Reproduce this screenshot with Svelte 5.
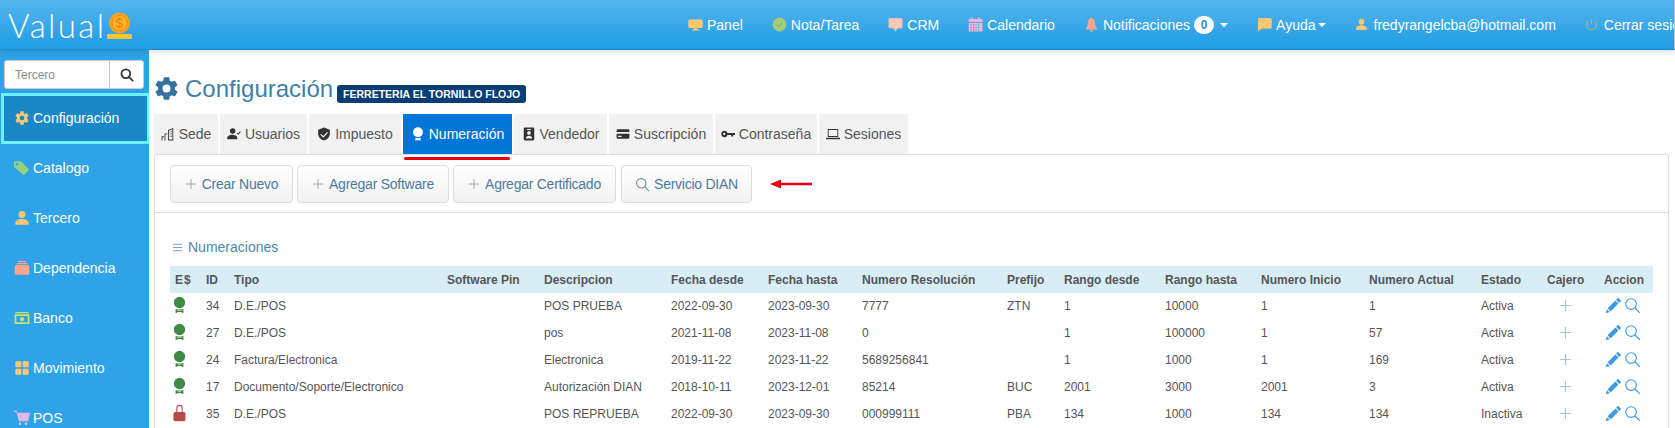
<script>
  // icon paths, all on a 24 box
  const paths = {
    gear: 'M12 15.5A3.5 3.5 0 0 1 8.5 12 3.5 3.5 0 0 1 12 8.5a3.5 3.5 0 0 1 3.5 3.5 3.5 3.5 0 0 1-3.5 3.5m7.43-2.53c.04-.32.07-.64.07-.97s-.03-.66-.07-1l2.11-1.63c.19-.15.24-.42.12-.64l-2-3.46c-.12-.22-.39-.31-.61-.22l-2.49 1c-.52-.39-1.06-.73-1.69-.98l-.37-2.65A.506.506 0 0 0 14 2h-4c-.25 0-.46.18-.5.42l-.37 2.65c-.63.25-1.17.59-1.69.98l-2.49-1c-.22-.09-.49 0-.61.22l-2 3.46c-.13.22-.07.49.12.64L4.57 11c-.04.34-.07.67-.07 1s.03.65.07.97l-2.11 1.66c-.19.15-.25.42-.12.64l2 3.46c.12.22.39.3.61.22l2.49-1.01c.52.4 1.06.74 1.69.99l.37 2.65c.04.24.25.42.5.42h4c.25 0 .46-.18.5-.42l.37-2.65c.63-.26 1.17-.59 1.69-.99l2.49 1.01c.22.08.49 0 .61-.22l2-3.46c.12-.22.07-.49-.12-.64l-2.11-1.66z',
    tag: 'M0 2h10l13 12.500L14.500 23 0 10zM4.500 4.500a2 2 0 1 0 0 4 2 2 0 0 0 0-4z',
    person: 'M12 12a5.2 5.2 0 1 0 0-10.4A5.2 5.2 0 0 0 12 12zm0 1.6c-4.6 0-10 2.2-10 5.6V22h20v-2.8c0-3.400-5.400-5.600-10-5.600z',
    box: 'M6 1.500h12v2H6zM4 4.500h16v2H4zM3.500 7.500h17A2.500 2.500 0 0 1 23 10v9.500a2.500 2.500 0 0 1-2.500 2.500h-17A2.500 2.500 0 0 1 1 19.500V10a2.500 2.500 0 0 1 2.500-2.500z',
    bank: 'M2 3h20v2H2zM1 6.500h22V21H1zM3.500 9v9.500h17V9zM12 10.500a3.200 3.200 0 1 0 0 6.400 3.200 3.200 0 0 0 0-6.400z',
    grid: 'M3 2h7a1.500 1.500 0 0 1 1 1v7a1.500 1.500 0 0 1-1 1H3a1.500 1.500 0 0 1-1-1V3a1.500 1.500 0 0 1 1-1zM14 2h7a1.500 1.500 0 0 1 1 1v7a1.500 1.500 0 0 1-1 1h-7a1.500 1.500 0 0 1-1-1V3a1.500 1.500 0 0 1 1-1zM3 13h7a1.500 1.500 0 0 1 1 1v7a1.500 1.500 0 0 1-1 1H3a1.500 1.500 0 0 1-1-1v-7a1.500 1.500 0 0 1 1-1zM14 13h7a1.500 1.500 0 0 1 1 1v7a1.500 1.500 0 0 1-1 1h-7a1.500 1.500 0 0 1-1-1v-7a1.500 1.500 0 0 1 1-1z',
    cart: 'M0 1h4.500l1 3H24l-2.500 13H7.500L3.500 3H0zM9 18.500a2 2 0 1 0 0 4 2 2 0 0 0 0-4zM18 18.500a2 2 0 1 0 0 4 2 2 0 0 0 0-4z',
    monitor: 'M3 4h18a2.500 2.500 0 0 1 2.500 2.500V15a2.500 2.500 0 0 1-2.500 2.500h-6V20h3v1.500H6V20h3v-2.500H3A2.500 2.500 0 0 1 .5 15V6.500A2.500 2.500 0 0 1 3 4z',
    note: 'M12 1a11 11 0 1 0 0 22 11 11 0 0 0 0-22z',
    bubble: 'M3 2h18a2 2 0 0 1 2 2v12a2 2 0 0 1-2 2h-5.500L12 23l-3.500-5H3a2 2 0 0 1-2-2V4a2 2 0 0 1 2-2z',
    calendar: 'M5 1h3v2h8V1h3v2h4v5H1V3h4zM1 9.500h22V23H1zM4 11.500v2h2v-2zM8 11.500v2h2v-2zM12 11.500v2h2v-2zM16 11.500v2h2v-2zM4 15.500v2h2v-2zM8 15.500v2h2v-2zM12 15.500v2h2v-2zM16 15.500v2h2v-2zM4 19.500v2h2v-2zM8 19.500v2h2v-2zM12 19.500v2h2v-2zM16 19.500v2h2v-2z',
    bell: 'M12 1a1.800 1.800 0 0 1 1.800 1.800C17 3.800 18 7 18 10c0 4 1 6.500 3 8.500v1.500H3v-1.500c2-2 3-4.500 3-8.500 0-3 1-6.200 4.200-7.200A1.800 1.800 0 0 1 12 1zM9.500 21h5a2.500 2.500 0 0 1-5 0z',
    chat: 'M4 1.500h17A2.500 2.500 0 0 1 23.500 4v12a2.500 2.500 0 0 1-2.500 2.500H8L1.500 23V4A2.500 2.500 0 0 1 4 1.500z',
    building: 'M12 23V5l9-3.500V23zM13.500 6.500v15h6V3.800zM15 7.500v2h1.200v-2zM17.500 6.500v2h1.200v-2zM15 11v2h1.200v-2zM17.500 10.500v2h1.200v-2zM15 15v2h1.200v-2zM17.500 14.500v2h1.200v-2zM6 23V11h5v1.500H7.500V23zM1 23v-7h4v1.500H2.500V23z',
    usercheck: 'M9 11.500A4.800 4.800 0 1 0 9 2a4.800 4.800 0 0 0 0 9.500zM9 13.200c-3.800 0-8.500 1.800-8.500 5V21h17v-2.800c0-3.200-4.700-5-8.500-5zM17 10.500l1.200-1.200 1.300 1.400 3-3.300 1.200 1.100-4.200 4.600z',
    shield: 'M12 1l10 3.500v7c0 5.500-4 10-10 11.500C6 21.500 2 17 2 11.500v-7zM17.300 8.500l-6.500 6.800-3.700-3.500-1.500 1.500 5.200 5 8-8.300z',
    award: 'M12 .5a8.500 8.500 0 1 1 0 17 8.500 8.500 0 0 1 0-17zM7.500 18.500c3 1 6 1 9 0V23.500l-2-1h-5l-2 1z',
    medal: 'M12 .5a8 8 0 1 1 0 16 8 8 0 0 1 0-16zM6.500 17.500c3.500 1.300 7.500 1.300 11 0V23.800l-3.500-1.800h-4l-3.500 1.800zM10 19.300l-1 .8h6l-1-.8z',
    badge: 'M5 1h14a2 2 0 0 1 2 2v18a2 2 0 0 1-2 2H5a2 2 0 0 1-2-2V3a2 2 0 0 1 2-2zM8.500 3.500v1.500h7V3.500zM12 7a3.200 3.200 0 1 0 0 6.400A3.200 3.200 0 0 0 12 7zM6.500 19.500h11c0-2.600-2.500-4.500-5.500-4.500s-5.500 1.900-5.500 4.500z',
    card: 'M3 4h18a2 2 0 0 1 2 2v2.500H1V6a2 2 0 0 1 2-2zM1 11.500h22V18a2 2 0 0 1-2 2H3a2 2 0 0 1-2-2zM3.500 15v2h6v-2z',
    key: 'M6 6.500a5.500 5.500 0 0 1 5.200 3.800H24v3.500h-3v2.500h-3.500v-2.500h-6.300A5.500 5.500 0 1 1 6 6.500zM5.500 10a2 2 0 1 0 0 4 2 2 0 0 0 0-4z',
    laptop: 'M3 3.500h18V17H3zM4.500 5v10.500h15V5zM0 18.500h24V20a1 1 0 0 1-1 1H1a1 1 0 0 1-1-1z',
    pencil: 'M18.500 1.200l4.300 4.300-2.800 2.800-4.300-4.300zM14.700 5l4.300 4.300L8 20.300l-4.300-4.300zM2.700 17.300l4 4L1 23z',
    lock: 'M12 .5a4.500 4.500 0 0 1 4.500 4.500v5.500h1.500A2.500 2.500 0 0 1 20.500 13v8a2.500 2.500 0 0 1-2.500 2.500H6A2.500 2.500 0 0 1 3.500 21v-8A2.500 2.500 0 0 1 6 10.500h1.500V5A4.500 4.500 0 0 1 12 .5zM12 2a3 3 0 0 0-3 3v5.500h6V5a3 3 0 0 0-3-3z',
    search: 'M10 2.500a7.500 7.500 0 1 1 0 15 7.500 7.500 0 0 1 0-15zM15.500 15.500L22.500 22.500',
    plus: 'M12 2v20M2 12h20',
    lines: 'M2 5h20M2 12h20M2 19h20',
    power: 'M12 2v9M7 5.200a9 9 0 1 0 10 0'
  };
  const strokeIcons = ['search', 'plus', 'lines', 'power'];

  const topLinks = [
    { label: 'Panel', icon: 'monitor', cls: 'c-orange' },
    { label: 'Nota/Tarea', icon: 'note', cls: 'c-green', check: true },
    { label: 'CRM', icon: 'bubble', cls: 'c-peach' },
    { label: 'Calendario', icon: 'calendar', cls: 'c-pink' },
    { label: 'Notificaciones', icon: 'bell', cls: 'c-salmon', badge: '0', caret: true },
    { label: 'Ayuda', icon: 'chat', cls: 'c-orange', caret: true },
    { label: 'fredyrangelcba@hotmail.com', icon: 'person', cls: 'c-orange small' },
    { label: 'Cerrar sesión', icon: 'power', cls: 'c-gold small' }
  ];

  const menu = [
    { label: 'Configuración', icon: 'gear', cls: 'c-orange', active: true },
    { label: 'Catalogo', icon: 'tag', cls: 'c-lime' },
    { label: 'Tercero', icon: 'person', cls: 'c-orange' },
    { label: 'Dependencia', icon: 'box', cls: 'c-salmon' },
    { label: 'Banco', icon: 'bank', cls: 'c-olive' },
    { label: 'Movimiento', icon: 'grid', cls: 'c-orange' },
    { label: 'POS', icon: 'cart', cls: 'c-lilac' }
  ];

  const tabs = [
    { label: 'Sede', icon: 'building' },
    { label: 'Usuarios', icon: 'usercheck' },
    { label: 'Impuesto', icon: 'shield' },
    { label: 'Numeración', icon: 'award', active: true },
    { label: 'Vendedor', icon: 'badge' },
    { label: 'Suscripción', icon: 'card' },
    { label: 'Contraseña', icon: 'key' },
    { label: 'Sesiones', icon: 'laptop' }
  ];

  const actions = [
    { label: 'Crear Nuevo', icon: 'plus' },
    { label: 'Agregar Software', icon: 'plus' },
    { label: 'Agregar Certificado', icon: 'plus' },
    { label: 'Servicio DIAN', icon: 'search' }
  ];

  const columns = ['E$', 'ID', 'Tipo', 'Software Pin', 'Descripcion', 'Fecha desde', 'Fecha hasta', 'Numero Resolución', 'Prefijo', 'Rango desde', 'Rango hasta', 'Numero Inicio', 'Numero Actual', 'Estado', 'Cajero', 'Accion'];

  const rows = [
    { id: 34, tipo: 'D.E./POS', pin: '', desc: 'POS PRUEBA', desde: '2022-09-30', hasta: '2023-09-30', res: '7777', pre: 'ZTN', rd: '1', rh: '10000', ini: '1', act: '1', estado: 'Activa' },
    { id: 27, tipo: 'D.E./POS', pin: '', desc: 'pos', desde: '2021-11-08', hasta: '2023-11-08', res: '0', pre: '', rd: '1', rh: '100000', ini: '1', act: '57', estado: 'Activa' },
    { id: 24, tipo: 'Factura/Electronica', pin: '', desc: 'Electronica', desde: '2019-11-22', hasta: '2023-11-22', res: '5689256841', pre: '', rd: '1', rh: '1000', ini: '1', act: '169', estado: 'Activa' },
    { id: 17, tipo: 'Documento/Soporte/Electronico', pin: '', desc: 'Autorización DIAN', desde: '2018-10-11', hasta: '2023-12-01', res: '85214', pre: 'BUC', rd: '2001', rh: '3000', ini: '2001', act: '3', estado: 'Activa' },
    { id: 35, tipo: 'D.E./POS', pin: '', desc: 'POS REPRUEBA', desde: '2022-09-30', hasta: '2023-09-30', res: '000999111', pre: 'PBA', rd: '134', rh: '1000', ini: '134', act: '134', estado: 'Inactiva' }
  ];
</script>

{#snippet ico(name, cls = '')}
  <svg class="ico {cls}" class:line={strokeIcons.includes(name)} viewBox="0 0 24 24" aria-hidden="true">
    <path d={paths[name]} fill-rule="evenodd" />
  </svg>
{/snippet}

<div class="app">
  <header class="topbar">
    <div class="brand">
      <span class="brand__name">Valual</span>
      <svg class="brand__coin" viewBox="0 0 25 28" aria-hidden="true">
        <circle cx="12.500" cy="11" r="10.500" fill="#f9a11b" />
        <circle cx="12.500" cy="11" r="7.500" fill="#fbb52c" stroke="#ee8f12" stroke-width="1" />
        <text x="12.500" y="16" text-anchor="middle" class="brand__dollar">$</text>
        <rect x="0" y="22" width="25" height="5" rx="1" fill="#f7c531" />
      </svg>
    </div>
    <nav class="toplinks">
      {#each topLinks as link}
        <span class="toplink">
          {#if link.check}
            <svg class="ico nav-ico {link.cls}" viewBox="0 0 24 24" aria-hidden="true">
              <path d={paths.note} />
              <path class="tick" d="M7.500 12.500l3 3 6-6.500" />
            </svg>
          {:else}
            {@render ico(link.icon, `nav-ico ${link.cls}`)}
          {/if}
          <span>{link.label}</span>
          {#if link.badge}<span class="badge">{link.badge}</span>{/if}
          {#if link.caret}<span class="caret" class:caret--far={link.badge}></span>{/if}
        </span>
      {/each}
    </nav>
  </header>

  <div class="body">
    <aside class="sidebar">
      <div class="search">
        <span class="search__input">Tercero</span>
        <span class="search__btn">{@render ico('search', 'search-ico')}</span>
      </div>
      <ul class="menu">
        {#each menu as item}
          <li class="menu__item" class:active={item.active}>
            {@render ico(item.icon, `menu-ico ${item.cls}`)}
            <span>{item.label}</span>
          </li>
        {/each}
      </ul>
    </aside>

    <main class="main">
      <div class="title">
        {@render ico('gear', 'title-ico')}
        <h1>Configuración</h1>
        <span class="title__label">FERRETERIA EL TORNILLO FLOJO</span>
      </div>

      <div class="tabs">
        {#each tabs as tab}
          <div class="tab" class:active={tab.active}>
            {@render ico(tab.icon, 'tab-ico')}
            <span>{tab.label}</span>
          </div>
        {/each}
      </div>

      <section class="panel">
        <div class="toolbar">
          {#each actions as action}
            <button type="button" class="btn">
              {@render ico(action.icon, action.icon === 'plus' ? 'btn-ico' : 'btn-ico btn-ico--search')}
              <span>{action.label}</span>
            </button>
          {/each}
          <svg class="arrow" viewBox="0 0 42 12" aria-hidden="true">
            <path d="M0 6L11 1.500V4.700H42V7.300H11V10.500z" />
          </svg>
        </div>

        <div class="listing">
          <div class="listing__title">
            {@render ico('lines', 'lines-ico')}
            <span>Numeraciones</span>
          </div>
          <table>
            <colgroup>
              {#each columns as _}<col />{/each}
            </colgroup>
            <thead>
              <tr>
                {#each columns as col, i}
                  <th class:wide={i === 0}>{col}</th>
                {/each}
              </tr>
            </thead>
            <tbody>
              {#each rows as r}
                <tr>
                  <td class="state">
                    {#if r.estado === 'Activa'}
                      {@render ico('medal', 'state-ico ok')}
                    {:else}
                      {@render ico('lock', 'state-ico off')}
                    {/if}
                  </td>
                  <td>{r.id}</td>
                  <td>{r.tipo}</td>
                  <td>{r.pin}</td>
                  <td>{r.desc}</td>
                  <td>{r.desde}</td>
                  <td>{r.hasta}</td>
                  <td>{r.res}</td>
                  <td>{r.pre}</td>
                  <td>{r.rd}</td>
                  <td>{r.rh}</td>
                  <td>{r.ini}</td>
                  <td>{r.act}</td>
                  <td>{r.estado}</td>
                  <td class="cajero">{@render ico('plus', 'plus-ico')}</td>
                  <td class="accion">
                    <span class="accion__wrap">
                      {@render ico('pencil', 'act-ico')}
                      {@render ico('search', 'act-ico')}
                    </span>
                  </td>
                </tr>
              {/each}
            </tbody>
          </table>
        </div>
      </section>
    </main>
  </div>
</div>

<style>
  :global(html),
  :global(body) {
    margin: 0;
    height: 428px;
    overflow: hidden;
    background: #fff;
  }

  .app {
    width: 1675px;
    height: 428px;
    overflow: hidden;
    display: flex;
    flex-direction: column;
    font-family: 'Liberation Sans', Arial, sans-serif;
    font-size: 12px;
    color: #555;
  }

  .ico {
    display: block;
    flex: none;
    fill: currentColor;
  }

  .ico.line {
    fill: none;
    stroke: currentColor;
    stroke-width: 1.6;
  }

  .c-orange { color: #ffc772; }
  .c-green { color: #a6d06d; }
  .c-peach { color: #ffc6b6; }
  .c-pink { color: #f6b3d9; }
  .c-salmon { color: #ffa58f; }
  .c-gold { color: #e0ae5c; }
  .c-lime { color: #93d27c; }
  .c-olive { color: #cde26d; }
  .c-lilac { color: #e2b8ea; }

  /* top bar */
  .topbar {
    flex: none;
    height: 50px;
    box-sizing: border-box;
    display: flex;
    align-items: center;
    background: linear-gradient(#55b5ee, #1f9ce4);
    border-bottom: 1px solid #1a8ed3;
    border-right: 1px solid #bdbdbd;
    box-shadow: 0 2px 6px rgba(0, 0, 0, 0.12);
    position: relative;
    z-index: 1;
    color: #fff;
    overflow: hidden;
  }

  .brand {
    flex: 0 0 673.5px;
    display: flex;
    align-items: center;
    padding-left: 8px;
    box-sizing: border-box;
  }

  .brand__name {
    font-family: Lato, 'Open Sans', sans-serif;
    font-weight: 300;
    font-size: 33px;
    letter-spacing: 2.4px;
    line-height: 36px;
  }

  .brand__coin {
    width: 25px;
    height: 28px;
    margin-left: 1px;
    margin-top: 2px;
  }

  .brand__dollar {
    font-family: 'Liberation Sans', sans-serif;
    font-size: 14px;
    font-weight: 700;
    fill: #f28a10;
  }

  .toplinks {
    display: flex;
    align-items: center;
    font-size: 14px;
    white-space: nowrap;
  }

  .toplink {
    display: flex;
    align-items: center;
    gap: 4px;
    padding: 0 14.5px;
  }

  .nav-ico {
    width: 15px;
    height: 15px;
  }

  .nav-ico.small {
    width: 13px;
    height: 13px;
    margin-right: 2px;
  }

  .tick {
    fill: none;
    stroke: #4f9fdb;
    stroke-width: 1.500;
  }

  .badge {
    width: 20px;
    height: 18px;
    border-radius: 9px;
    background: #fff;
    color: #2a8fd8;
    font-size: 12px;
    font-weight: 700;
    line-height: 18px;
    text-align: center;
  }

  .caret {
    width: 0;
    height: 0;
    border: 4px solid transparent;
    border-top-color: #fff;
    border-bottom-width: 0;
    margin-left: -2px;
  }

  .caret--far {
    margin-left: 2px;
  }

  /* sidebar */
  .body {
    flex: 1;
    display: flex;
    min-height: 0;
  }

  .sidebar {
    flex: 0 0 149px;
    background: #2ea3e8;
    padding-top: 10px;
    box-sizing: border-box;
  }

  .search {
    display: flex;
    height: 29px;
    margin: 0 5px 4px 4px;
    box-sizing: border-box;
    background: #fff;
    border: 1px solid #ccc;
    border-radius: 3px;
  }

  .search__input {
    flex: 1;
    padding-left: 10px;
    line-height: 28px;
    color: #8c8c8c;
  }

  .search__btn {
    flex: 0 0 33px;
    display: flex;
    align-items: center;
    justify-content: center;
    border-left: 1px solid #ccc;
    color: #333;
  }

  .search-ico {
    width: 14px;
    height: 14px;
  }

  .search-ico.line {
    stroke-width: 3;
  }

  .menu {
    list-style: none;
    margin: 0;
    padding: 0;
  }

  .menu__item {
    height: 50px;
    box-sizing: border-box;
    display: flex;
    align-items: center;
    gap: 3px;
    padding-left: 14px;
    color: #fff;
    font-size: 14px;
  }

  .menu__item.active {
    height: 51px;
    margin: 0 0 -1px 1px;
    padding: 0 0 1px 10px;
    background: #1a87c9;
    border: 3px solid #6ff0fa;
    border-right-width: 2px;
  }

  .menu-ico {
    width: 16px;
    height: 16px;
  }

  /* main */
  .main {
    flex: 1;
    min-width: 0;
    padding: 20px 6px 0 5px;
  }

  .title {
    display: flex;
    align-items: center;
    height: 36px;
    margin-bottom: 8px;
    color: #3d7fa9;
  }

  .title-ico {
    width: 27px;
    height: 27px;
    margin-left: -1px;
    margin-top: 1px;
    color: #33729e;
  }

  h1 {
    margin: 1px 0 0 5px;
    font-size: 24px;
    font-weight: 400;
    line-height: 36px;
  }

  .title__label {
    margin: 11px 0 0 4px;
    padding: 0 6px;
    height: 18px;
    line-height: 18px;
    border-radius: 3px;
    background: #0a3d73;
    color: #fff;
    font-size: 10.5px;
    font-weight: 700;
    white-space: nowrap;
  }

  .tabs {
    display: flex;
    gap: 2px;
    height: 40px;
    font-size: 14px;
  }

  .tab {
    position: relative;
    box-sizing: border-box;
    display: flex;
    align-items: center;
    justify-content: center;
    gap: 4px;
    background: #f2f2f2;
    color: #555;
    white-space: nowrap;
  }

  .tab:nth-child(1) { width: 64px; }
  .tab:nth-child(2) { width: 87px; }
  .tab:nth-child(3) { width: 92px; }
  .tab:nth-child(4) { width: 109px; }
  .tab:nth-child(5) { width: 93px; }
  .tab:nth-child(6) { width: 104px; }
  .tab:nth-child(7) { width: 102px; }
  .tab:nth-child(8) { width: 89px; }

  .tab.active {
    background: #0275d8;
    color: #fff;
  }

  .tab.active::after {
    content: '';
    position: absolute;
    left: 1px;
    right: 2px;
    bottom: -6px;
    height: 3px;
    border-radius: 2px;
    background: #e8000d;
  }

  .tab-ico {
    width: 14px;
    height: 14px;
    color: #333;
  }

  .tab.active .tab-ico {
    color: #fff;
  }

  .panel {
    border: 1px solid #ddd;
    border-bottom: 0;
    border-radius: 3px 3px 0 0;
    height: 300px;
  }

  .toolbar {
    display: flex;
    align-items: center;
    gap: 4px;
    padding: 10px 15px 9px;
    border-bottom: 1px solid #ddd;
  }

  .btn {
    box-sizing: border-box;
    height: 38px;
    display: flex;
    align-items: center;
    justify-content: center;
    gap: 5px;
    padding: 0;
    font: 14px 'Liberation Sans', Arial, sans-serif;
    letter-spacing: -0.25px;
    color: #4d7a9c;
    background: linear-gradient(#fff, #f2f2f2);
    border: 1px solid #ddd;
    border-radius: 4px;
  }

  .btn:nth-child(1) { width: 123px; }
  .btn:nth-child(2) { width: 152px; }
  .btn:nth-child(3) { width: 163px; }
  .btn:nth-child(4) { width: 131px; margin-left: 1px; }

  .btn-ico {
    width: 12px;
    height: 12px;
    color: #9aa3ad;
  }

  .btn-ico.line {
    stroke-width: 1.800;
  }

  .btn-ico--search {
    width: 15px;
    height: 15px;
    margin-right: -1px;
    color: #6d8ea8;
  }

  .arrow {
    width: 42px;
    height: 12px;
    margin-left: 14px;
    fill: #e60012;
  }

  .listing {
    padding: 25px 15px 0;
  }

  .listing__title {
    display: flex;
    align-items: center;
    gap: 5px;
    height: 18px;
    margin-bottom: 10px;
    font-size: 14px;
    color: #4a87b0;
  }

  .lines-ico {
    width: 11px;
    height: 11px;
    margin-left: 2px;
  }

  table {
    width: 1483px;
    table-layout: fixed;
    border-collapse: collapse;
  }

  col:nth-child(1) { width: 31px; }
  col:nth-child(2) { width: 28px; }
  col:nth-child(3) { width: 213px; }
  col:nth-child(4) { width: 97px; }
  col:nth-child(5) { width: 127px; }
  col:nth-child(6) { width: 97px; }
  col:nth-child(7) { width: 94px; }
  col:nth-child(8) { width: 145px; }
  col:nth-child(9) { width: 57px; }
  col:nth-child(10) { width: 101px; }
  col:nth-child(11) { width: 96px; }
  col:nth-child(12) { width: 108px; }
  col:nth-child(13) { width: 112px; }
  col:nth-child(14) { width: 66px; }
  col:nth-child(15) { width: 57px; }
  col:nth-child(16) { width: 54px; }

  th,
  td {
    height: 27px;
    box-sizing: border-box;
    padding: 0 5px;
    text-align: left;
    white-space: nowrap;
    overflow: hidden;
  }

  td {
    padding-bottom: 2px;
  }

  thead tr {
    background: #d9edf7;
  }

  th.wide {
    letter-spacing: 1px;
  }

  .state {
    padding-left: 1px;
  }

  .state-ico {
    width: 17px;
    height: 18px;
    margin-top: -2px;
  }

  .state-ico.ok {
    color: #3f8a45;
  }

  .state-ico.off {
    color: #b94a4a;
  }

  .cajero {
    padding-left: 17px;
  }

  .plus-ico {
    width: 13px;
    height: 13px;
    margin-top: -1px;
    color: #a3c2f2;
  }

  .plus-ico.line {
    stroke-width: 2;
  }

  .accion {
    padding-left: 6px;
  }

  .accion__wrap {
    display: flex;
    gap: 2px;
  }

  .act-ico {
    width: 17px;
    height: 17px;
    color: #3b9ae1;
  }
</style>
